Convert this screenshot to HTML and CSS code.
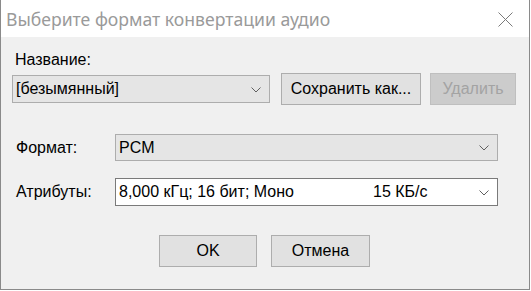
FILE: index.html
```html
<!DOCTYPE html>
<html lang="ru">
<head>
    <meta charset="UTF-8">
    <title>Выберите формат конвертации аудио</title>
    <link rel="stylesheet" href="styles.css">
</head>
<body>
    <div class="window">
        <div class="titlebar">
            <span class="title">Выберите формат конвертации аудио</span>
            <span class="close">
                <svg width="15" height="15" viewBox="0 0 15 15">
                    <path d="M0.5 0.5 L14.5 14.5 M14.5 0.5 L0.5 14.5" stroke="#7a7a7a" stroke-width="1" fill="none"/>
                </svg>
            </span>
        </div>

        <div class="content">
            <div class="name-label">Название:</div>

            <div class="name-row">
                <div class="combo combo-name">
                    <span class="combo-text">[безымянный]</span>
                    <svg class="chevron" width="10" height="6" viewBox="0 0 10 6">
                        <path d="M0.5 0.5 L5 5 L9.5 0.5" stroke="#606060" stroke-width="1" fill="none"/>
                    </svg>
                </div>
                <button class="btn btn-save">Сохранить как...</button>
                <button class="btn btn-delete" disabled>Удалить</button>
            </div>

            <div class="field-row row-format">
                <label class="field-label">Формат:</label>
                <div class="combo combo-wide">
                    <span class="combo-text">PCM</span>
                    <svg class="chevron" width="10" height="6" viewBox="0 0 10 6">
                        <path d="M0.5 0.5 L5 5 L9.5 0.5" stroke="#606060" stroke-width="1" fill="none"/>
                    </svg>
                </div>
            </div>

            <div class="field-row row-attrs">
                <label class="field-label">Атрибуты:</label>
                <div class="combo combo-wide combo-white">
                    <span class="combo-text attr-main">8,000 кГц; 16 бит; Моно</span>
                    <span class="attr-rate">15 КБ/с</span>
                    <svg class="chevron" width="10" height="6" viewBox="0 0 10 6">
                        <path d="M0.5 0.5 L5 5 L9.5 0.5" stroke="#606060" stroke-width="1" fill="none"/>
                    </svg>
                </div>
            </div>

            <div class="actions">
                <button class="btn btn-ok">OK</button>
                <button class="btn btn-cancel">Отмена</button>
            </div>
        </div>
    </div>
</body>
</html>
```

FILE: styles.css
```css
/* Dialog window */
body {
    margin: 0;
    padding: 0;
    background: #ffffff;
    font-family: "Liberation Sans", Arial, sans-serif;
    font-size: 16px;
    color: #000;
}

.window {
    width: 530px;
    height: 290px;
    box-sizing: border-box;
    border: 1px solid #8a8a8a;
    border-top: none;
    background: #f0f0f0;
    display: flex;
    flex-direction: column;
}

.titlebar {
    height: 37px;
    background: #ffffff;
    display: flex;
    align-items: center;
    justify-content: space-between;
    padding-left: 5px;
    padding-right: 16px;
    flex-shrink: 0;
}

.title {
    font-family: "Noto Sans", "Open Sans", sans-serif;
    font-size: 17.6px;
    color: #9a9a9a;
}

.close {
    display: flex;
    margin-top: 1px;
}

.content {
    flex: 1;
    padding: 0 11px;
}

.name-label {
    margin-top: 14px;
    margin-left: 3px;
    line-height: 18px;
}

.name-row {
    display: flex;
    align-items: center;
    margin-top: 4px;
    height: 32px;
}

/* Combo boxes */
.combo {
    display: flex;
    align-items: center;
    box-sizing: border-box;
    border: 1px solid #adadad;
    background: #e5e5e5;
    padding: 0 8px 0 3px;
}

.combo-text {
    flex: 1;
    white-space: nowrap;
}

.combo-name {
    width: 258px;
    height: 28px;
}

.combo-wide {
    width: 383px;
    height: 28px;
    margin-left: auto;
}

.combo-white {
    background: #ffffff;
    border-color: #7a7a7a;
}

.attr-main {
    flex: none;
    width: 254px;
}

.attr-rate {
    flex: 1;
}

.chevron {
    flex: none;
    margin-top: 1px;
}

/* Buttons */
.btn {
    font-family: "Liberation Sans", Arial, sans-serif;
    font-size: 16px;
    box-sizing: border-box;
    height: 32px;
    border: 1px solid #adadad;
    background: #e1e1e1;
    color: #000;
    padding: 0;
}

.btn-save {
    width: 140px;
    margin-left: 11px;
}

.btn-delete {
    width: 86px;
    margin-left: 9px;
    background: #cccccc;
    border-color: #bfbfbf;
    color: #a3a3a3;
}

.field-row {
    display: flex;
    align-items: center;
    width: 486px;
}

.row-format {
    margin-top: 29px;
}

.row-format .combo {
    height: 27px;
}

.row-attrs {
    margin-top: 17px;
}

.field-label {
    margin-left: 4px;
}

.actions {
    display: flex;
    justify-content: center;
    gap: 14px;
    margin-top: 29px;
    padding-right: 1px;
}

.btn-ok {
    width: 98px;
}

.btn-cancel {
    width: 99px;
}
```
